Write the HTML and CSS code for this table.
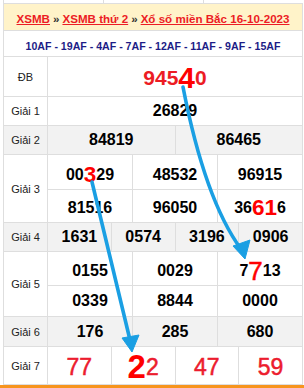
FILE: index.html
```html
<!DOCTYPE html>
<html lang="vi">
<head>
<meta charset="utf-8">
<title>XSMB 16-10-2023</title>
<link rel="stylesheet" href="styles.css">
</head>
<body>
<div class="top"><span></span><span></span><span></span></div>
<div class="board">
  <div class="title all"><a href="#">XSMB</a> <b>»</b> <a href="#">XSMB thứ 2</a> <b>»</b> <a href="#">Xổ số miền Bắc 16-10-2023</a></div>
  <div class="codes all">10AF - 19AF - 4AF - 7AF - 12AF - 11AF - 9AF - 15AF</div>

  <div class="lbl">ĐB</div>
  <div class="num c12 db">945<span class="db-big">4</span>0</div>

  <div class="lbl">Giải 1</div>
  <div class="num c12">26829</div>

  <div class="lbl grey">Giải 2</div>
  <div class="num c6 grey">84819</div>
  <div class="num c6 grey">86465</div>

  <div class="lbl two">Giải 3</div>
  <div class="num c4 g3a">00<span class="hot">3</span>29</div>
  <div class="num c4 g3a">48532</div>
  <div class="num c4 g3a">96915</div>
  <div class="num c4 g3b">81516</div>
  <div class="num c4 g3b">96050</div>
  <div class="num c4 g3b">36<span class="hot">61</span>6</div>

  <div class="lbl grey">Giải 4</div>
  <div class="num c3 grey">1631</div>
  <div class="num c3 grey">0574</div>
  <div class="num c3 grey">3196</div>
  <div class="num c3 grey">0906</div>

  <div class="lbl two">Giải 5</div>
  <div class="num c4 g5a">0155</div>
  <div class="num c4 g5a">0029</div>
  <div class="num c4 g5a">7<span class="hot-thin">7</span>13</div>
  <div class="num c4">0339</div>
  <div class="num c4">8844</div>
  <div class="num c4">0000</div>

  <div class="lbl grey">Giải 6</div>
  <div class="num c4 grey">176</div>
  <div class="num c4 grey">285</div>
  <div class="num c4 grey">680</div>

  <div class="lbl">Giải 7</div>
  <div class="num c3 g7">77</div>
  <div class="num c3 g7"><span class="g7-big">2</span>2</div>
  <div class="num c3 g7">47</div>
  <div class="num c3 g7">59</div>
</div>
<div class="foot"></div>

<svg class="arrows" width="304" height="388" viewBox="0 0 304 388">
  <path d="M183 87 Q 205 200 241 249" />
  <polygon points="245,259 233,246 250,240" />
  <path d="M92 182 Q 118 290 130 340" />
  <polygon points="132,352 122,338 139,335" />
</svg>
</body>
</html>
```
FILE: styles.css
```css
html, body {
  margin: 0;
  padding: 0;
  background: #fff;
}
body {
  width: 304px;
  height: 388px;
  overflow: hidden;
  font-family: "Liberation Sans", Arial, sans-serif;
  color: #111;
}
.top {
  display: flex;
  height: 3px;
  margin-left: 3px;
  width: 300px;
}
.top span {
  flex: 1;
  border-left: 1px solid #ddd;
}
.board {
  display: grid;
  grid-template-columns: 43px repeat(12, 1fr);
  grid-template-rows: 26px 25px 39px 28px 28px 34px 32px 28px 33px 30px 29px 37px;
  gap: 1px;
  padding: 1px;
  margin-left: 3px;
  width: 298px;
  background: #dedede;
}
.board > div {
  background: #fff;
  display: flex;
  align-items: center;
  justify-content: center;
  box-sizing: border-box;
}
.board > .grey {
  background: #f2f2f2;
}
.all {
  grid-column: 1 / -1;
}
.title {
  background: #fff3c9 !important;
  font-size: 11.6px;
  font-weight: bold;
  padding-top: 2px;
  white-space: nowrap;
}
.title a {
  color: #ec1c24;
  text-decoration: underline;
}
.title b {
  color: #333;
  margin: 0 3px;
}
.codes {
  font-size: 10.6px;
  font-weight: bold;
  color: #1c1c86;
  padding-top: 4px;
  white-space: nowrap;
}
.lbl {
  font-size: 11px;
  color: #222;
}
.lbl.two {
  grid-row: span 2;
}
.num {
  font-size: 16px;
  font-weight: bold;
  line-height: 18px;
  color: #000;
  white-space: nowrap;
}
.c12 { grid-column: span 12; }
.c6 { grid-column: span 6; }
.c4 { grid-column: span 4; }
.c3 { grid-column: span 3; }

.db {
  font-size: 21px;
  color: #ec1c24;
  padding-top: 3px;
}
.db-big {
  font-size: 30px;
  line-height: 0;
  color: #ff0000;
}
.hot {
  font-size: 22.5px;
  line-height: 0;
  color: #ff0000;
}
.hot-thin {
  font-size: 26px;
  font-weight: normal;
  line-height: 0;
  color: #ff0000;
  -webkit-text-stroke: 0.5px #ff0000;
}
.g3a { padding-top: 6px; }
.g3b { padding-top: 3px; }
.g5a { padding-top: 5px; }
.g7 {
  font-size: 23px;
  font-weight: normal;
  color: #ec1c2e;
  padding-top: 2px;
  -webkit-text-stroke: 0.5px #ec1c2e;
}
.g7-big {
  font-size: 33px;
  font-weight: bold;
  line-height: 0;
  color: #ff0000;
  -webkit-text-stroke: 0;
}
.foot {
  height: 3px;
  background: #f7941d;
}
.arrows {
  position: absolute;
  left: 0;
  top: 0;
  pointer-events: none;
}
.arrows path {
  fill: none;
  stroke: #1a9fe3;
  stroke-width: 3.6;
  stroke-linecap: round;
}
.arrows polygon {
  fill: #1a9fe3;
  stroke: #1a9fe3;
  stroke-width: 1;
  stroke-linejoin: round;
}
```
